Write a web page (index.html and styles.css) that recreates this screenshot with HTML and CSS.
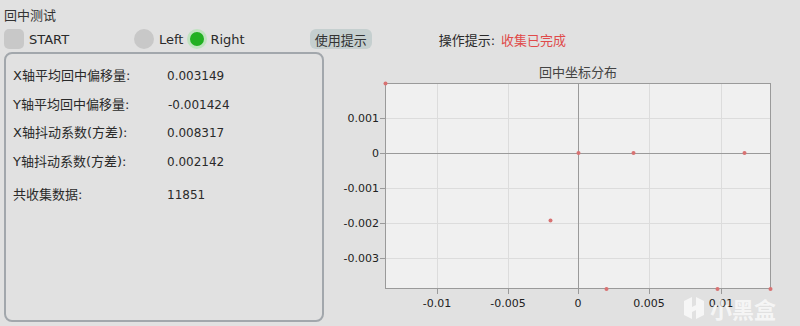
FILE: index.html
```html
<!DOCTYPE html>
<html lang="zh">
<head>
    <meta charset="UTF-8">
    <meta name="viewport" content="width=device-width, initial-scale=1.0">
    <title>回中测试</title>
    <link rel="stylesheet" href="styles.css">
</head>
<body>
    <div class="title">回中测试</div>
    <div class="toolbar">
        <span class="check"></span>
        <span class="lbl start-lbl">START</span>
        <span class="radio"></span>
        <span class="lbl">Left</span>
        <span class="radio on"></span>
        <span class="lbl right-lbl">Right</span>
        <button class="hint-btn">使用提示</button>
        <span class="op-label">操作提示:</span>
        <span class="op-state">收集已完成</span>
    </div>
    <div class="main">
        <div class="panel">
            <div class="row"><span class="key">X轴平均回中偏移量:</span><span class="val">0.003149</span></div>
            <div class="row"><span class="key">Y轴平均回中偏移量:</span><span class="val neg">-0.001424</span></div>
            <div class="row"><span class="key">X轴抖动系数(方差):</span><span class="val">0.008317</span></div>
            <div class="row"><span class="key">Y轴抖动系数(方差):</span><span class="val">0.002142</span></div>
            <div class="row total"><span class="key">共收集数据:</span><span class="val">11851</span></div>
        </div>
        <div class="chart">
            <svg width="456" height="266" viewBox="0 0 456 266">
                <text class="ctitle" x="244" y="21" text-anchor="middle">回中坐标分布</text>
                <rect x="51" y="27" width="386" height="206" fill="#f0f0f0"/>
                <!-- grid -->
                <g stroke="#dcdcdc" stroke-width="1">
                    <line x1="103.5" y1="27" x2="103.5" y2="233"/>
                    <line x1="174.5" y1="27" x2="174.5" y2="233"/>
                    <line x1="315.5" y1="27" x2="315.5" y2="233"/>
                    <line x1="387.5" y1="27" x2="387.5" y2="233"/>
                    <line x1="51" y1="62.5" x2="437" y2="62.5"/>
                    <line x1="51" y1="132.5" x2="437" y2="132.5"/>
                    <line x1="51" y1="167.5" x2="437" y2="167.5"/>
                    <line x1="51" y1="202.5" x2="437" y2="202.5"/>
                </g>
                <g stroke="#9a9a9a" stroke-width="1">
                    <line x1="244.5" y1="27" x2="244.5" y2="233"/>
                    <line x1="51" y1="97.5" x2="437" y2="97.5"/>
                    <rect x="51.5" y="27.5" width="385" height="205" fill="none"/>
                    <line x1="46" y1="62.5" x2="51" y2="62.5"/>
                    <line x1="46" y1="97.5" x2="51" y2="97.5"/>
                    <line x1="46" y1="132.5" x2="51" y2="132.5"/>
                    <line x1="46" y1="167.5" x2="51" y2="167.5"/>
                    <line x1="46" y1="202.5" x2="51" y2="202.5"/>
                    <line x1="103.5" y1="233" x2="103.5" y2="238"/>
                    <line x1="174.5" y1="233" x2="174.5" y2="238"/>
                    <line x1="244.5" y1="233" x2="244.5" y2="238"/>
                    <line x1="315.5" y1="233" x2="315.5" y2="238"/>
                    <line x1="387.5" y1="233" x2="387.5" y2="238"/>
                </g>
                <g class="tick" text-anchor="end">
                    <text x="45" y="66">0.001</text>
                    <text x="45" y="101">0</text>
                    <text x="45" y="136">-0.001</text>
                    <text x="45" y="171">-0.002</text>
                    <text x="45" y="206">-0.003</text>
                </g>
                <g class="tick" text-anchor="middle">
                    <text x="103" y="251">-0.01</text>
                    <text x="174" y="251">-0.005</text>
                    <text x="244" y="251">0</text>
                    <text x="315" y="251">0.005</text>
                    <text x="387" y="251">0.01</text>
                </g>
                <g fill="#d87272">
                    <circle cx="51.5" cy="27.5" r="2"/>
                    <circle cx="244.5" cy="97" r="2"/>
                    <circle cx="299.5" cy="97" r="2"/>
                    <circle cx="410.5" cy="97" r="2"/>
                    <circle cx="216.5" cy="164.5" r="2"/>
                    <circle cx="272.5" cy="233" r="2"/>
                    <circle cx="383.5" cy="233" r="2"/>
                    <circle cx="436.5" cy="233" r="2"/>
                </g>
            </svg>
            <div class="watermark">
                <svg class="wm-logo" width="24" height="26" viewBox="0 0 24 26">
                    <path d="M2 6 L10 2 L10 24 L2 20 Z M14 2 L22 6 L22 20 L14 24 Z M10 12 L14 10 L14 15 L10 17 Z" fill="rgba(255,255,255,0.7)"/>
                </svg>
                <span>小黑盒</span>
            </div>
        </div>
    </div>
</body>
</html>
```

FILE: styles.css
```css
body {
    margin: 0;
    padding: 7px 4px 4px 4px;
    width: 800px;
    height: 326px;
    box-sizing: border-box;
    background-color: #e1e1e1;
    color: #2a2a2a;
    font-family: "DejaVu Sans", "Noto Sans CJK SC", sans-serif;
    font-size: 13px;
    overflow: hidden;
}
.title {
    height: 20px;
    line-height: 18px;
    color: #333;
}
.toolbar {
    display: flex;
    align-items: center;
    height: 24px;
}
.check {
    width: 20px;
    height: 20px;
    border-radius: 5px;
    background-color: #c8c8c8;
}
.lbl {
    margin-left: 5px;
}
.start-lbl {
    width: 105px;
}
.radio {
    width: 20px;
    height: 20px;
    border-radius: 50%;
    background-color: #c8c8c8;
}
.radio.on {
    width: 14px;
    height: 14px;
    margin-left: 4px;
    background-color: #22b022;
    border: 3px solid #bfe3bf;
}
.right-lbl {
    margin-left: 3px;
}
.hint-btn {
    margin-left: 65px;
    height: 20px;
    padding: 0 5px;
    border: none;
    border-radius: 6px;
    background-color: #c5cfcf;
    color: #333;
    font-family: inherit;
    font-size: 13px;
}
.op-label {
    margin-left: 67px;
}
.op-state {
    margin-left: 6px;
    color: #e04a4a;
}
.main {
    display: flex;
    margin-top: 1px;
}
.panel {
    width: 320px;
    height: 270px;
    box-sizing: border-box;
    border: 2px solid #a2a7ac;
    border-radius: 8px;
    padding: 12px 0 0 7px;
}
.row {
    display: flex;
    height: 28.5px;
    line-height: 20px;
}
.row.total {
    margin-top: 5px;
}
.key {
    width: 154px;
}
.val {
    font-size: 12px;
}
.val.neg {
    margin-left: 1px;
}
.chart {
    position: relative;
    margin-left: 10px;
    margin-top: 4px;
    width: 456px;
    height: 266px;
}
.chart svg {
    display: block;
}
.ctitle {
    font-family: "DejaVu Sans", "Noto Sans CJK SC", sans-serif;
    font-size: 13px;
    fill: #444;
}
.tick {
    font-family: "DejaVu Sans", sans-serif;
    font-size: 11px;
    fill: #222;
}
.watermark {
    position: absolute;
    left: 348px;
    top: 236px;
    display: flex;
    align-items: center;
    gap: 4px;
    color: rgba(255, 255, 255, 0.7);
    font-size: 22px;
    font-weight: bold;
}
```
